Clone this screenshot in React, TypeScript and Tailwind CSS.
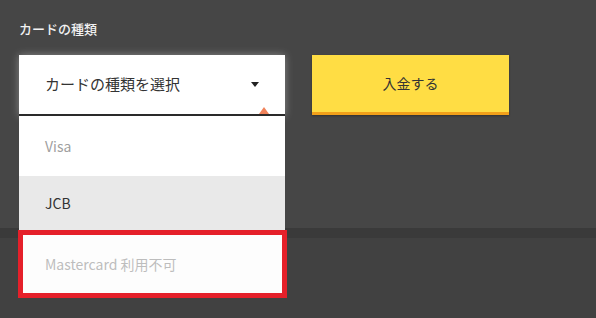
const font = { fontFamily: '"Noto Sans CJK JP", "Noto Sans", sans-serif' };

export default function App() {
  return (
    <div className="w-[596px] h-[318px] bg-[#414141] overflow-hidden" style={font}>
      {/* form panel */}
      <div className="relative h-[228px] bg-[#464646] pl-[19px] pt-[19px]">
        <div className="text-[13px] leading-[20px] font-medium text-[#f2f2f2]">カードの種類</div>
        <div className="mt-[16px] flex gap-[27px]">
          <div className="relative w-[266px]">
            <div className="h-[61px] bg-white border-b-2 border-[#2a2a2a] shadow-[0_0_8px_rgba(255,255,255,0.35)] flex items-center pl-[26px] pr-[26px]">
              <span className="flex-1 text-[15px] text-[#333]">カードの種類を選択</span>
              <span className="w-0 h-0 border-l-[4px] border-r-[4px] border-t-[5px] border-l-transparent border-r-transparent border-t-[#222]" />
            </div>
            {/* arrow of the open menu */}
            <span className="absolute right-[16px] top-[52px] w-0 h-0 border-l-[5px] border-r-[5px] border-b-[7px] border-l-transparent border-r-transparent border-b-[#f0825a]" />
            {/* open menu */}
            <div className="absolute left-0 top-[61px] w-[266px] z-10">
              <div className="h-[60px] bg-white flex items-center pl-[26px] text-[14px] text-[#a0a0a0]">Visa</div>
              <div className="h-[54px] bg-[#e9e9e9] flex items-center pl-[26px] text-[14px] text-[#333]">JCB</div>
              <div className="h-[68px] -mx-[1px] -mr-[2px] bg-[#fdfdfd] border-[5px] border-[#e5202a] flex items-center pl-[22px] text-[14px] text-[#bdbdbd]">
                Mastercard 利用不可
              </div>
            </div>
          </div>
          <button className="w-[197px] h-[60px] bg-[#ffdd44] border-b-[3px] border-[#f2a01a] text-[14px] text-[#333] shadow-[0_1px_2px_rgba(0,0,0,0.3)]">
            入金する
          </button>
        </div>
      </div>
      <div className="h-[10px] bg-[#3a3a3a]" />
    </div>
  );
}
